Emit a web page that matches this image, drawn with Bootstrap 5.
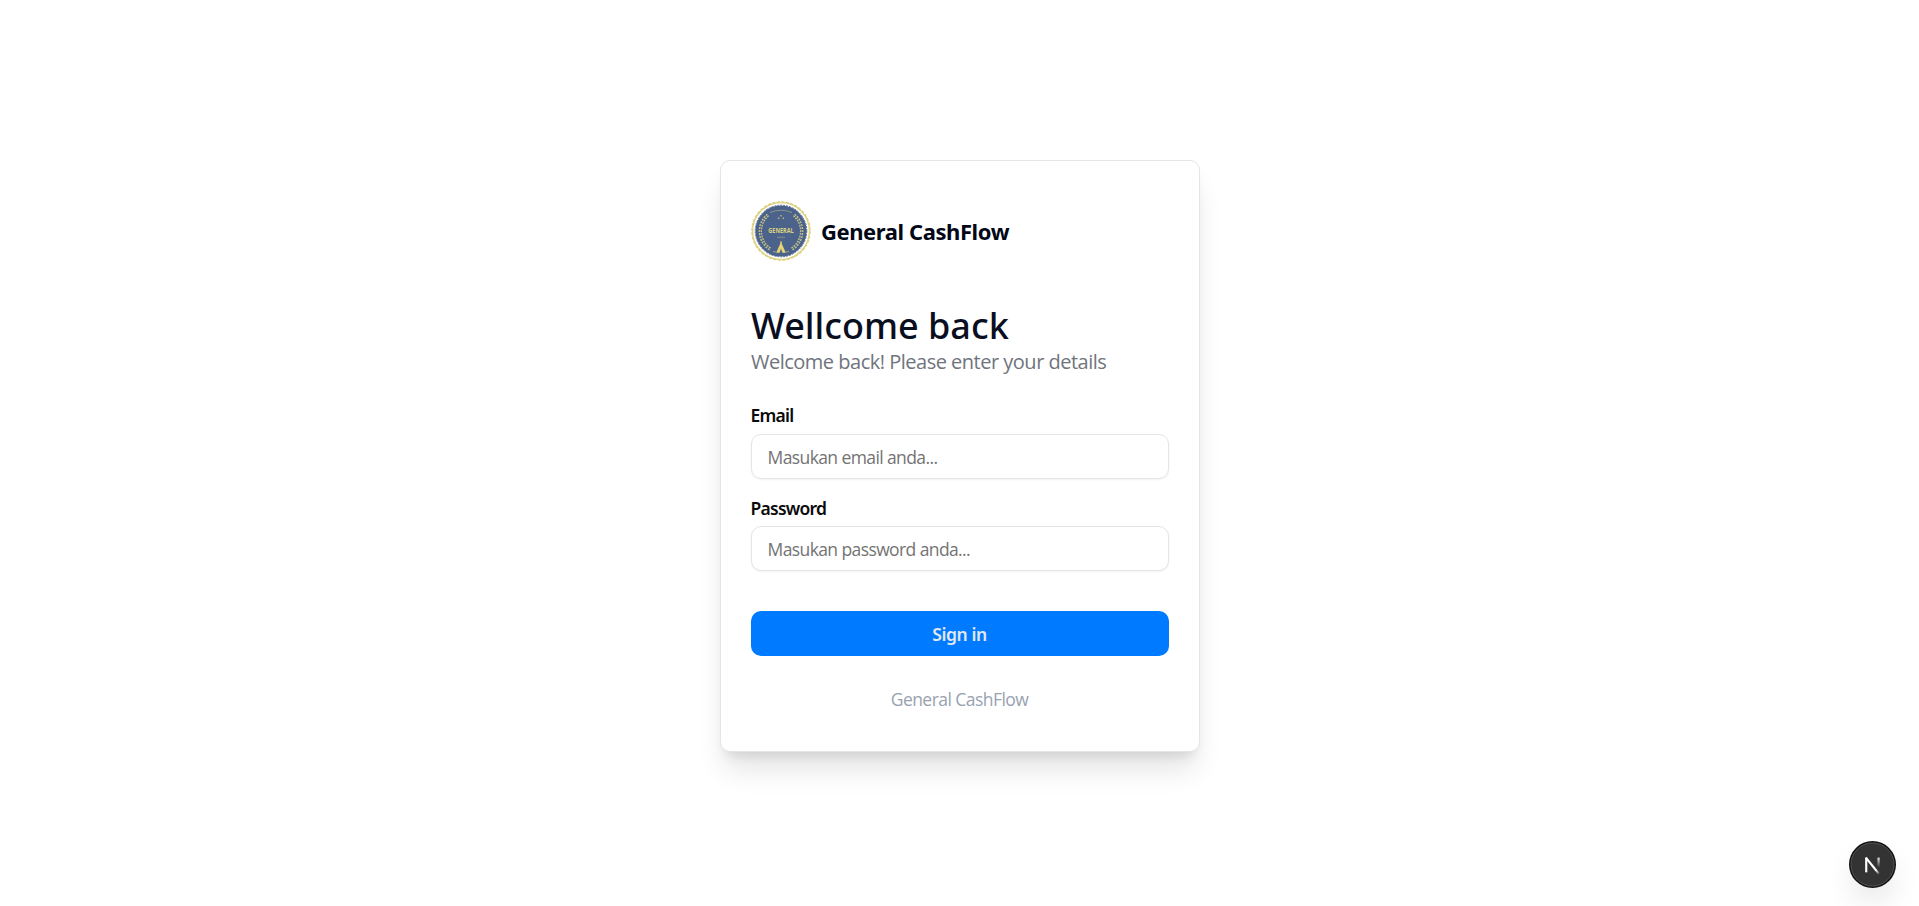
<!DOCTYPE html>
<html lang="id">
<head>
<meta charset="utf-8">
<meta name="viewport" content="width=device-width, initial-scale=1">
<title>General CashFlow</title>
<link rel="stylesheet" href="https://cdn.jsdelivr.net/npm/bootstrap@5.3.0/dist/css/bootstrap.min.css">
<style>
  body { font-family: "Segoe UI", "Open Sans", "Noto Sans", sans-serif; background: #fff; overflow: hidden; padding-top: 6px; }
  .signin-card { width: 480px; height: 592px; border: 1px solid #e5e5e5; border-radius: 10px; padding: 40px 30px 0;
    box-shadow: 0 22px 29px -5px rgba(0,0,0,.11), 0 9px 12px -6px rgba(0,0,0,.11); }
  .brand-row { height: 60px; gap: 10px; }
  .brand-name { font: 700 22px/30px "Noto Sans", sans-serif; letter-spacing: -.42px; color: #020817; padding-left: .5px; }
  .headline { font: 500 36px/44px "Noto Sans", sans-serif; color: #0a0f1f; margin: 43px 0 0; padding-left: .5px; }
  .subline { font-size: 20px; line-height: 28px; letter-spacing: -.5px; color: #6f747d; margin: 0; padding-left: .5px; }
  .field-label { font: 600 17.5px/24px "Noto Sans", sans-serif; letter-spacing: -.75px; color: #0a0a0a; }
  .label-email { margin: 27px 0 7px; }
  .label-password { margin: 17px 0 6px; }
  .field-input { height: 45px; font-size: 17.5px; letter-spacing: -.6px; border: 1px solid #e5e5e5; border-radius: 10px;
    padding: 0 15px 0 16px; box-shadow: 0 1px 2px rgba(0,0,0,.05); }
  .field-input::placeholder { color: #737373; opacity: 1; }
  .signin-btn, .signin-btn:hover { height: 45px; margin-top: 40px; background: #007aff; border: 0; border-radius: 10px; color: #e2e8f0;
    font: 600 17.5px/24px "Noto Sans", sans-serif; letter-spacing: -.4px; }
  .foot-note { margin-top: 31px; font-size: 17.5px; line-height: 24px; letter-spacing: -.55px; color: #98a2b0; }
  .dev-badge { right: 23px; bottom: 18.5px; width: 47px; height: 47px; border-radius: 50%;
    box-shadow: 0 16px 32px -8px rgba(0,0,0,.18); }
</style>
</head>
<body class="vh-100 d-flex align-items-center justify-content-center">
<main class="card signin-card">
  <div class="brand-row d-flex align-items-center">
    <svg width="60" height="60" viewBox="-30 -30 60 60" aria-hidden="true">
      <circle r="28.4" fill="#fff" stroke="#dcd27f" stroke-width="1.3"/>
      <circle r="29.1" fill="none" stroke="#dcd27f" stroke-width="1.3" stroke-dasharray="3.2 1.371"/>
      <circle r="25.6" fill="#4b628b"/>
      <circle r="25.8" fill="none" stroke="#4b628b" stroke-width=".9" stroke-dasharray="2 1"/>
      <g fill="none" stroke="#c5c284">
        <path d="M-13-16C-24-7-23 10-11 18M13-16C24-7 23 10 11 18" stroke-width="3.4" stroke-dasharray="1.9 1"/>
        <path d="M-13-16C-24-7-23 10-11 18M13-16C24-7 23 10 11 18" stroke="#4b628b" stroke-width=".7"/>
        <path d="M-11-18.5Q0-23 11-18.5" stroke-width=".7" opacity=".75"/>
        <path d="M-8 20.5-5 21M8 20.5 5 21" stroke-width=".7"/>
        <path d="M-4 6.3H4" stroke-width=".7" opacity=".7"/>
        <path d="M0-16v1.6M-2.8-13.2l1 1M2.8-13.2l-1 1" stroke-width="1.3"/>
      </g>
      <text x="0" y="2" text-anchor="middle" font-family="Open Sans, sans-serif" font-weight="700" font-size="6.2" textLength="25.5" lengthAdjust="spacingAndGlyphs" fill="#dcd27f">GENERAL</text>
      <path d="M-1.2 9.5 0 11.5 1.2 9.5.7 12.5 4.8 21.7H1.4L0 17.5-1.4 21.7H-4.8L-.7 12.5Z" fill="#e5d577"/>
    </svg>
    <span class="brand-name">General CashFlow</span>
  </div>
  <h1 class="headline">Wellcome back</h1>
  <p class="subline">Welcome back! Please enter your details</p>
  <form class="d-flex flex-column">
    <label class="field-label label-email" for="email">Email</label>
    <input class="form-control field-input" id="email" type="email" placeholder="Masukan email anda...">
    <label class="field-label label-password" for="password">Password</label>
    <input class="form-control field-input" id="password" type="password" placeholder="Masukan password anda...">
    <button class="btn signin-btn w-100" type="button">Sign in</button>
  </form>
  <div class="foot-note text-center">General CashFlow</div>
</main>
<div class="dev-badge position-fixed">
  <svg class="d-block" width="47" height="47" viewBox="0 0 48 48" fill="none" aria-label="N">
    <defs>
      <linearGradient id="diag" x1="24" y1="25" x2="31.5" y2="34" gradientUnits="userSpaceOnUse"><stop offset=".5" stop-color="#fff"/><stop offset="1" stop-color="#fff" stop-opacity="0"/></linearGradient>
      <linearGradient id="stem" x1="30" y1="16" x2="30" y2="27" gradientUnits="userSpaceOnUse"><stop offset="0" stop-color="#fff"/><stop offset="1" stop-color="#fff" stop-opacity="0"/></linearGradient>
    </defs>
    <circle cx="24" cy="24" r="24" fill="#111"/>
    <circle cx="24" cy="24" r="22" fill="#333" stroke="#555"/>
    <path d="M17.6 32V17" stroke="#fff" stroke-width="2.2"/>
    <path d="M17.2 17 30.6 33.6" stroke="url(#diag)" stroke-width="2.3"/>
    <path d="M30.2 17V28" stroke="url(#stem)" stroke-width="2.2"/>
  </svg>
</div>
<script src="https://cdn.jsdelivr.net/npm/bootstrap@5.3.0/dist/js/bootstrap.bundle.min.js"></script>
</body>
</html>
